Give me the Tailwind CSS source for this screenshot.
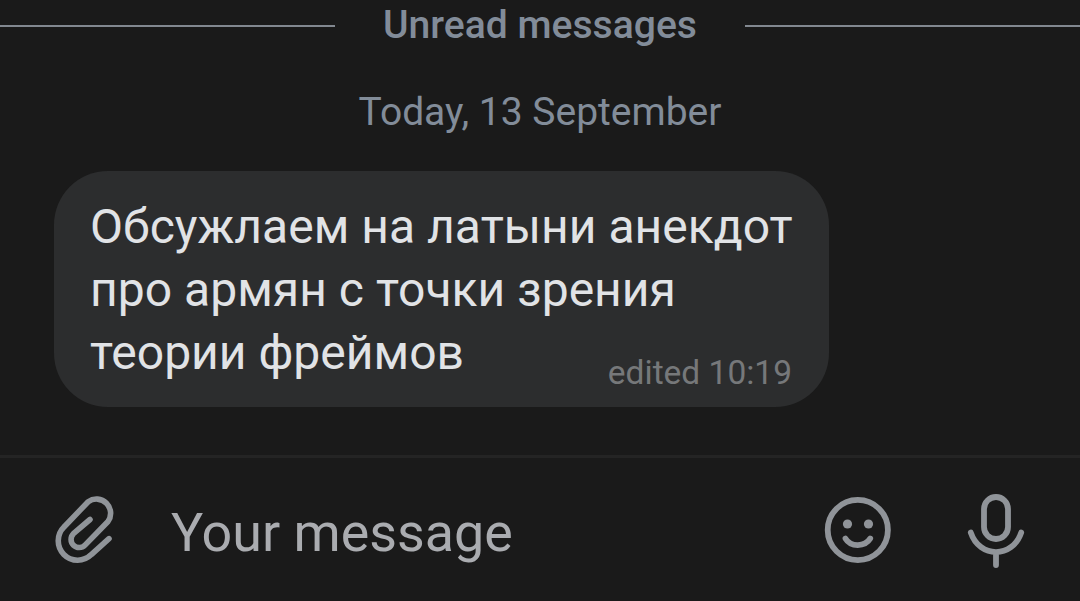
<!DOCTYPE html>
<html lang="en">
  <head>
    <meta charset="UTF-8" />
    <meta name="viewport" content="width=device-width, initial-scale=1.0" />
    <title>Chat</title>
    <script src="https://cdn.jsdelivr.net/npm/@tailwindcss/browser@4"></script>
  </head>
  <body class="flex flex-col w-[1080px] h-[601px] overflow-hidden bg-[#1a1a1a] font-[Roboto,sans-serif] whitespace-nowrap">
    <main class="flex flex-col h-[455px]">
      <div class="flex items-center h-[52px] text-[#828c99]">
        <div class="flex-1 h-0.5 bg-[#828890]"></div>
        <h2 class="w-[410px] text-center text-[39.1px] leading-[50px] font-medium pb-0.5">Unread messages</h2>
        <div class="flex-1 h-0.5 bg-[#828890]"></div>
      </div>

      <p class="mt-[35px] h-[50px] text-center text-[39px] leading-[50px] text-[#828c99]">Today, 13 September</p>

      <div class="flex justify-between mt-[34px] ml-[54px] w-[775px] h-[236px] pl-9 pr-[37px] pt-6 rounded-[54px] bg-[#2c2d2e]">
        <p class="w-0 text-[48px] leading-[63px] tracking-[0.03px] text-[#e1e3e6]">
          Обсужлаем на латыни анекдот<br />
          про армян с точки зрения<br />
          теории фреймов
        </p>
        <span class="self-end mb-3.5 text-[33.5px] leading-10 text-[#76787a]">edited 10:19</span>
      </div>
    </main>

    <footer class="flex items-center h-[146px] border-t-3 border-[#242424] text-[#909499]">
      <svg class="size-[100px] ml-10" viewBox="0 0 100 100" fill="none" stroke="currentColor" stroke-width="5.6" stroke-linecap="round" stroke-linejoin="round">
        <path d="M69 58.6L51.3 74.6A19 19 0 0 1 24 47L48.2 21.7A14.2 14.2 0 0 1 68 41.5L45 65.1A8.1 8.1 0 0 1 33.4 53.7L50 39.5" />
      </svg>
      <span class="ml-[31px] w-[639px] pt-1.5 text-[53.8px] leading-[64px] text-[#aaacb0]">Your message</span>
      <svg class="size-[100px]" viewBox="0 0 100 100" fill="none" stroke="currentColor" stroke-width="5.8" stroke-linecap="round">
        <circle cx="47.8" cy="50" r="30.1" />
        <circle cx="37.5" cy="44" r="4.6" fill="currentColor" stroke="none" />
        <circle cx="58.5" cy="44" r="4.6" fill="currentColor" stroke="none" />
        <path d="M35.5 58.6C40.5 67.2 55 67.2 60.2 58.6" />
      </svg>
      <svg class="size-[100px] ml-10" viewBox="0 0 100 100" fill="none" stroke="currentColor" stroke-width="5.8" stroke-linecap="round">
        <rect x="34" y="17" width="24" height="42" rx="12" />
        <path d="M20.8 52.6C29.5 78.5 62.5 78.5 71.2 52.6M46 73V85" />
      </svg>
    </footer>
  </body>
</html>
